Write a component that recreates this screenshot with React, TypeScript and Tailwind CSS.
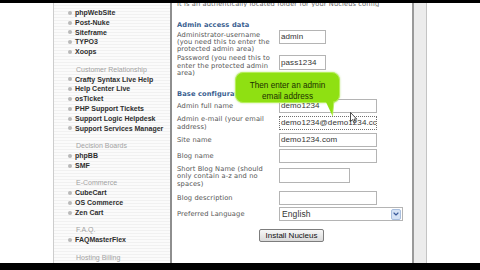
import { ChevronDown } from 'lucide-react';

const groups = [
  { title: '', items: ['phpWebSite', 'Post-Nuke', 'Siteframe', 'TYPO3', 'Xoops'] },
  {
    title: 'Customer Relationship',
    items: [
      'Crafty Syntax Live Help',
      'Help Center Live',
      'osTicket',
      'PHP Support Tickets',
      'Support Logic Helpdesk',
      'Support Services Manager',
    ],
  },
  { title: 'Decision Boards', items: ['phpBB', 'SMF'] },
  { title: 'E-Commerce', items: ['CubeCart', 'OS Commerce', 'Zen Cart'] },
  { title: 'F.A.Q.', items: ['FAQMasterFlex'] },
  { title: 'Hosting Billing', items: [] as string[] },
];

function Sidebar() {
  return (
    <aside className="w-[116px] pt-[5px] bg-[repeating-linear-gradient(to_bottom,#fbfbfb_0px,#fbfbfb_2px,#f1f1f1_2px,#f1f1f1_3px)] font-['Liberation_Sans',Arial,sans-serif] text-[7px]">
      {groups.map((group) => (
        <div key={group.title || 'top'}>
          {group.title && (
            <div className="mt-[7.6px] h-[10px] leading-[10px] pl-[22px] text-[#a3a3a3] whitespace-nowrap">
              {group.title}
            </div>
          )}
          {group.items.map((item) => (
            <div key={item} className="flex items-center h-[9.8px] pl-[14px] gap-[3px] whitespace-nowrap">
              <span className="w-[4px] h-[4px] rounded-full bg-[#b9b9b9] shrink-0" />
              <span className="font-bold text-[#2e2e2e] leading-[9.8px]">{item}</span>
            </div>
          ))}
        </div>
      ))}
    </aside>
  );
}

function Field({ value, width = 'w-[98px]', dotted = false, className = '' }: { value?: string; width?: string; dotted?: boolean; className?: string }) {
  return (
    <div
      className={`${width} h-[14px] shrink-0 border ${dotted ? 'border-dotted border-[#707070]' : 'border-[#b4b4b4]'} bg-white pl-[1px] font-['Liberation_Sans',Arial,sans-serif] text-[8px] leading-[12px] text-[#333] overflow-hidden whitespace-nowrap ${className}`}
    >
      {value}
    </div>
  );
}

function Label({ lines, className = '' }: { lines: string[]; className?: string }) {
  return (
    <div className={`w-[102px] shrink-0 leading-[7.4px] whitespace-nowrap ${className}`}>
      {lines.map((l) => (
        <div key={l}>{l}</div>
      ))}
    </div>
  );
}

function InstallForm() {
  return (
    <main className="w-[242px] border-l-2 border-[#8e8e8e] bg-white pl-[5px] flex flex-col font-['DejaVu_Sans',Verdana,sans-serif] text-[6.7px] tracking-[0.1px] text-[#555]">
      <div className="h-[4px] overflow-hidden">
        <p className="-mt-[3px] leading-[8px] whitespace-nowrap text-[#666]">
          It is an authentically located folder for your Nucleus config
        </p>
      </div>

      <div className="mt-[14px] h-[8px] leading-[8px] font-bold text-[#3b5f91]">Admin access data</div>

      <div className="mt-[1px] flex items-start">
        <Label className="pt-[1.5px] leading-[7.2px]" lines={['Administrator-username', '(you need this to enter the', 'protected admin area)']} />
        <Field value="admin" width="w-[47px]" className="text-[8.2px]" />
      </div>

      <div className="mt-[1px] flex items-start">
        <Label className="pt-[0.5px]" lines={['Password (you need this to', 'enter the protected admin', 'area)']} />
        <Field value="pass1234" width="w-[47px]" className="h-[15px] leading-[13px]" />
      </div>

      <div className="mt-[13px] h-[8px] leading-[8px] font-bold text-[#3b5f91]">Base configuration</div>

      <div className="mt-[1px] flex items-center">
        <Label lines={['Admin full name']} />
        <Field value="demo1234" />
      </div>

      <div className="mt-[3px] flex items-start">
        <Label className="leading-[7.5px]" lines={['Admin e-mail (your email', 'address)']} />
        <Field value="demo1234@demo1234.com" dotted />
      </div>

      <div className="mt-[2px] flex items-center">
        <Label lines={['Site name']} />
        <Field value="demo1234.com" />
      </div>

      <div className="mt-[2px] flex items-center">
        <Label lines={['Blog name']} />
        <Field />
      </div>

      <div className="mt-[2.3px] flex items-start">
        <Label lines={['Short Blog Name (should', 'only contain a-z and no', 'spaces)']} />
        <Field width="w-[71px]" className="mt-[2.7px] h-[15px]" />
      </div>

      <div className="mt-[3.5px] flex items-center">
        <Label lines={['Blog description']} />
        <Field />
      </div>

      <div className="mt-[2px] flex items-center">
        <Label lines={['Preferred Language']} />
        <div className="w-[124px] h-[14px] border border-[#b4b4b4] bg-white flex items-center justify-between pl-[2px] pr-[1px] font-['Liberation_Sans',Arial,sans-serif] text-[8.5px] text-[#333]">
          <span>English</span>
          <span className="w-[10px] h-[11px] rounded-[2px] border border-[#a9bfdf] bg-[#d5e2f5] flex items-center justify-center">
            <ChevronDown size={8} strokeWidth={3.5} color="#3a5a9a" />
          </span>
        </div>
      </div>

      <div className="mt-[8px] self-center -ml-[6px] w-[65px] h-[13px] border border-[#7d7d7d] rounded-[2px] bg-[linear-gradient(#f7f7f7,#dadada)] flex items-center justify-center font-['Liberation_Sans',Arial,sans-serif] text-[8px] text-[#111] tracking-normal">
        Install Nucleus
      </div>
    </main>
  );
}

export default function App() {
  return (
    <div className="relative w-[480px] h-[270px] bg-black flex flex-col overflow-hidden">
      <div className="h-[3px] bg-black" />
      <div className="flex h-[260px] bg-white">
        <div className="w-[54px] bg-white border-r border-[#cdcdcd]" />
        <Sidebar />
        <InstallForm />
        <div className="w-[15px] border-l-2 border-[#9a9a9a] border-r border-r-[#c4c4c4] bg-[#ececec]" />
        <div className="flex-1 bg-white" />
      </div>
      <div className="flex-1 bg-black" />

      {/* tooltip callout */}
      <div className="absolute left-[235px] top-[72px] w-[105px] h-[31px] rounded-[8px] border border-[#b6ef5a] bg-[#8fe012] shadow-[0_0_2px_rgba(140,210,40,0.6)] pt-[7px] text-center font-['Liberation_Sans',Arial,sans-serif] text-[8.2px] leading-[11px] text-[#1d3000]">
        <div>Then enter an admin</div>
        <div>email address</div>
      </div>
      <svg className="absolute left-[322px] top-[100px]" width="14" height="17" viewBox="0 0 14 17">
        <polygon points="3,0 12,0 10.5,16" fill="#8fe012" />
        <line x1="12" y1="1" x2="10.5" y2="16" stroke="#b6ef5a" strokeWidth="0.8" />
      </svg>

      {/* mouse pointer */}
      <svg className="absolute left-[350px] top-[112px]" width="8" height="12" viewBox="0 0 8 12">
        <path d="M0.5 0.5 L0.5 9.5 L2.6 7.6 L4 11 L5.4 10.4 L4 7.1 L6.8 7.1 Z" fill="#fff" stroke="#222" strokeWidth="0.8" />
      </svg>
    </div>
  );
}
